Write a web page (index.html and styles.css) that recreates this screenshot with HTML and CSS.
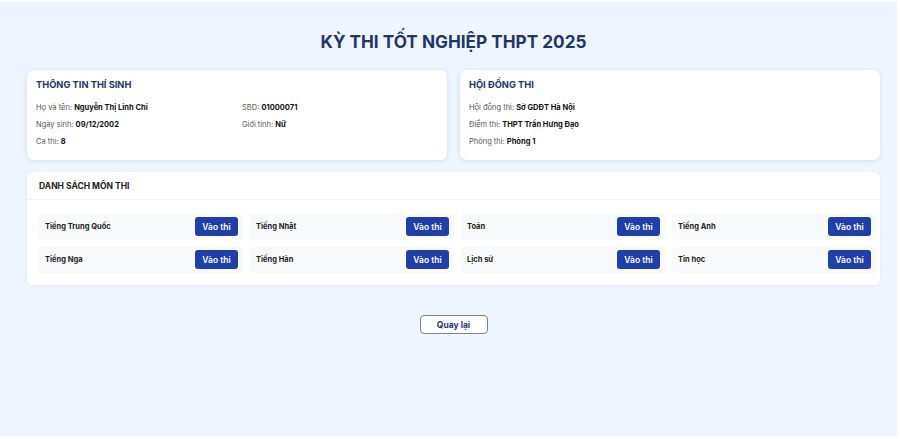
FILE: index.html
```html
<!DOCTYPE html>
<html lang="vi">
<head>
<meta charset="utf-8">
<link rel="stylesheet" href="styles.css">
</head>
<body>
<div class="page">
  <div class="wrap">
    <h1 class="title">KỲ THI TỐT NGHIỆP THPT 2025</h1>
    <div class="info-row">
      <section class="card">
        <h2 class="card-title">THÔNG TIN THÍ SINH</h2>
        <div class="fields two">
          <div class="field">Họ và tên: <b>Nguyễn Thị Linh Chi</b></div>
          <div class="field">SBD: <b>01000071</b></div>
          <div class="field">Ngày sinh: <b>09/12/2002</b></div>
          <div class="field">Giới tính: <b>Nữ</b></div>
          <div class="field">Ca thi: <b>8</b></div>
        </div>
      </section>
      <section class="card">
        <h2 class="card-title">HỘI ĐỒNG THI</h2>
        <div class="fields">
          <div class="field">Hội đồng thi: <b>Sở GDĐT Hà Nội</b></div>
          <div class="field">Điểm thi: <b>THPT Trần Hưng Đạo</b></div>
          <div class="field">Phòng thi: <b>Phòng 1</b></div>
        </div>
      </section>
    </div>
    <section class="subjects">
      <div class="subjects-head">DANH SÁCH MÔN THI</div>
      <div class="subject-grid">
        <div class="subject"><span>Tiếng Trung Quốc</span><button class="btn">Vào thi</button></div>
        <div class="subject"><span>Tiếng Nhật</span><button class="btn">Vào thi</button></div>
        <div class="subject"><span>Toán</span><button class="btn">Vào thi</button></div>
        <div class="subject"><span>Tiếng Anh</span><button class="btn">Vào thi</button></div>
        <div class="subject"><span>Tiếng Nga</span><button class="btn">Vào thi</button></div>
        <div class="subject"><span>Tiếng Hàn</span><button class="btn">Vào thi</button></div>
        <div class="subject"><span>Lịch sử</span><button class="btn">Vào thi</button></div>
        <div class="subject"><span>Tin học</span><button class="btn">Vào thi</button></div>
      </div>
    </section>
    <div class="back-row"><button class="back">Quay lại</button></div>
  </div>
</div>
</body>
</html>
```
FILE: styles.css
```css
* { box-sizing: border-box; }
body {
  margin: 0;
  background: #ffffff;
  font-family: Inter, "Noto Sans", sans-serif;
  color: #111;
}
.page {
  width: 897px;
  height: 434px;
  margin-top: 2px;
  background: #eef5ff;
  overflow: hidden;
}
.wrap {
  width: 853px;
  margin-left: 27px;
  padding-top: 29px;
}
.title {
  margin: 0 0 17px;
  text-align: center;
  font-size: 17.2px;
  line-height: 22px;
  font-weight: 700;
  color: #1e3669;
}
.info-row {
  display: grid;
  grid-template-columns: 420px 420px;
  column-gap: 13px;
}
.card {
  background: #fff;
  border-radius: 7px;
  box-shadow: 0 1px 5px rgba(30, 60, 120, 0.12);
  padding: 8px 9px 12px;
  height: 90px;
}
.card-title {
  margin: 0 0 10px;
  font-size: 9.3px;
  line-height: 14px;
  font-weight: 700;
  color: #1e3669;
}
.fields {
  display: grid;
  row-gap: 5px;
}
.fields.two {
  grid-template-columns: 206px 1fr;
}
.field {
  font-size: 7.5px;
  line-height: 12px;
  color: #555;
}
.field b { color: #111; font-weight: 700; }
.subjects {
  margin-top: 12px;
  background: #fff;
  border-radius: 6px;
  box-shadow: 0 1px 4px rgba(30, 60, 120, 0.06);
  height: 113px;
}
.subjects-head {
  height: 28px;
  padding: 1px 12px 0;
  display: flex;
  align-items: center;
  font-size: 8.5px;
  font-weight: 700;
  color: #222;
  border-bottom: 1px solid #f0f2f5;
}
.subject-grid {
  padding: 14px 5px 0 12px;
  display: grid;
  grid-template-columns: repeat(4, 204px);
  column-gap: 7px;
  row-gap: 7px;
}
.subject {
  height: 26px;
  background: #f8f9fa;
  border-radius: 3px;
  display: flex;
  align-items: center;
  justify-content: space-between;
  padding: 0 5px 1px 6px;
  font-size: 7.5px;
  font-weight: 700;
  color: #222;
}
.btn {
  width: 43px;
  height: 19px;
  border: 0;
  border-radius: 3px;
  background: #1e40a8;
  color: #fff;
  font-family: Inter, "Noto Sans", sans-serif;
  font-size: 8.5px;
  font-weight: 600;
  padding: 0;
}
.back-row {
  margin-top: 30px;
  display: flex;
  justify-content: center;
}
.back {
  width: 68px;
  height: 19px;
  background: #fff;
  border: 1px solid #7a8294;
  border-radius: 4px;
  color: #1e3669;
  font-family: Inter, "Noto Sans", sans-serif;
  font-size: 8.5px;
  font-weight: 700;
  padding: 0;
}
```
